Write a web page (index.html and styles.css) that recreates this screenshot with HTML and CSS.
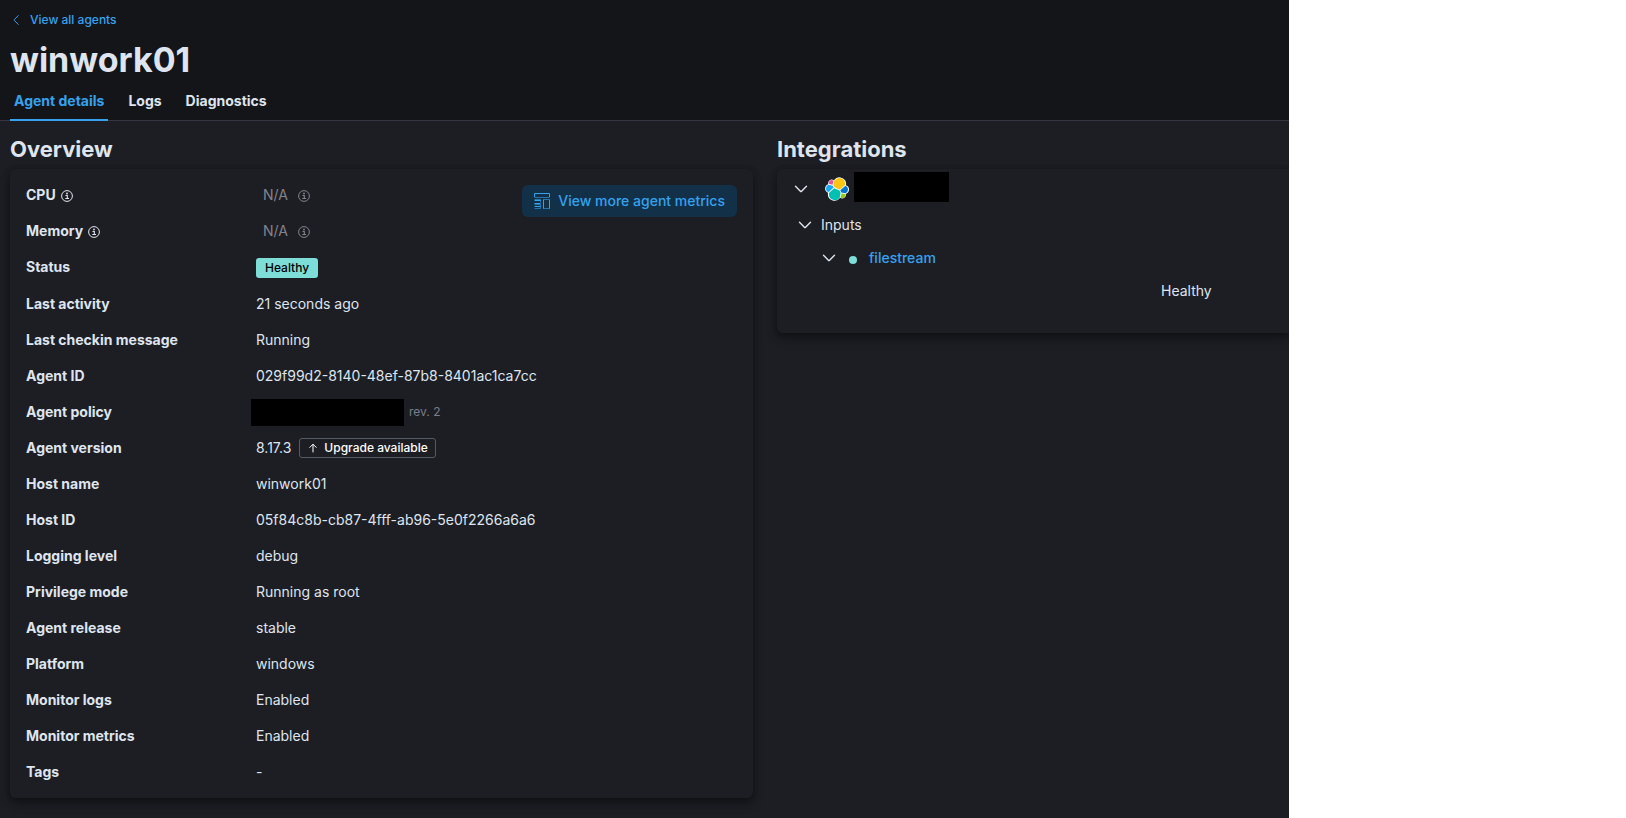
FILE: index.html
```html
<!DOCTYPE html>
<html lang="en">
<head>
    <meta charset="UTF-8">
    <meta name="viewport" content="width=device-width, initial-scale=1.0">
    <title>winwork01 - Agents</title>
    <link rel="stylesheet" href="styles.css">
</head>
<body>
    <!-- shared icons -->
    <svg class="sprite" aria-hidden="true">
        <symbol id="info" viewBox="0 0 12 12">
            <circle cx="6" cy="6" r="5.4" fill="none" stroke="currentColor" stroke-width="1"/>
            <path d="M4.5 5.500h1.800v3M4.300 8.500h3.700" fill="none" stroke="currentColor" stroke-width="1.1"/>
            <circle cx="6" cy="3.500" r="0.9" fill="currentColor"/>
        </symbol>
        <symbol id="arrowDown" viewBox="0 0 16 16">
            <path d="M2.5 5.3L7.4 10.2a.8.8 0 0 0 1.2 0L13.5 5.3" fill="none" stroke="currentColor" stroke-width="1.4" stroke-linecap="round"/>
        </symbol>
    </svg>

    <div class="app">
        <header class="header">
            <a class="backLink" href="#">
                <svg class="backIcon" viewBox="0 0 12 12"><path d="M8.200 1.600L4.300 5.600a.6.6 0 0 0 0 .8L8.200 10.400" fill="none" stroke="currentColor" stroke-linecap="round"/></svg>
                View all agents
            </a>
            <h1>winwork01</h1>
            <nav class="tabs">
                <a class="tab active" href="#">Agent details</a>
                <a class="tab" href="#">Logs</a>
                <a class="tab" href="#">Diagnostics</a>
            </nav>
        </header>

        <main class="content">
            <section>
                <h2>Overview</h2>
                <div class="panel overview">
                    <dl class="details">
                        <div class="row">
                            <dt>CPU <svg class="infoIcon"><use href="#info"/></svg></dt>
                            <dd class="notAvailable">N/A <svg class="infoIcon"><use href="#info"/></svg></dd>
                        </div>
                        <div class="row">
                            <dt>Memory <svg class="infoIcon"><use href="#info"/></svg></dt>
                            <dd class="notAvailable">N/A <svg class="infoIcon"><use href="#info"/></svg></dd>
                        </div>
                        <div class="row status">
                            <dt>Status</dt>
                            <dd><span class="badge healthy">Healthy</span></dd>
                        </div>
                        <div class="row">
                            <dt>Last activity</dt>
                            <dd>21 seconds ago</dd>
                        </div>
                        <div class="row">
                            <dt>Last checkin message</dt>
                            <dd>Running</dd>
                        </div>
                        <div class="row">
                            <dt>Agent ID</dt>
                            <dd>029f99d2-8140-48ef-87b8-8401ac1ca7cc</dd>
                        </div>
                        <div class="row">
                            <dt>Agent policy</dt>
                            <dd class="policy"><span class="hiddenPolicy"></span><span class="revision">rev. 2</span></dd>
                        </div>
                        <div class="row">
                            <dt>Agent version</dt>
                            <dd>
                                8.17.3
                                <span class="badge upgrade">
                                    <svg class="upIcon" viewBox="0 0 12 12"><path d="M6 10V2.500M2.800 5.400L6 2.200l3.200 3.200" fill="none" stroke="currentColor" stroke-linecap="round" stroke-linejoin="round"/></svg>
                                    Upgrade available
                                </span>
                            </dd>
                        </div>
                        <div class="row">
                            <dt>Host name</dt>
                            <dd>winwork01</dd>
                        </div>
                        <div class="row">
                            <dt>Host ID</dt>
                            <dd>05f84c8b-cb87-4fff-ab96-5e0f2266a6a6</dd>
                        </div>
                        <div class="row">
                            <dt>Logging level</dt>
                            <dd>debug</dd>
                        </div>
                        <div class="row">
                            <dt>Privilege mode</dt>
                            <dd>Running as root</dd>
                        </div>
                        <div class="row">
                            <dt>Agent release</dt>
                            <dd>stable</dd>
                        </div>
                        <div class="row">
                            <dt>Platform</dt>
                            <dd>windows</dd>
                        </div>
                        <div class="row">
                            <dt>Monitor logs</dt>
                            <dd>Enabled</dd>
                        </div>
                        <div class="row">
                            <dt>Monitor metrics</dt>
                            <dd>Enabled</dd>
                        </div>
                        <div class="row">
                            <dt>Tags</dt>
                            <dd>-</dd>
                        </div>
                    </dl>
                    <button class="metricsButton" type="button">
                        <svg class="dashboardIcon" viewBox="0 0 16 16" fill="none" stroke="currentColor">
                            <path d="M.5 4V.5h15V4"/>
                            <path d="M.5 4.500h15" opacity="0.6"/>
                            <path d="M.5 7.500h6M.5 10.500h6M.5 13.500h6M9.500 7v8.500M15.500 7v8.500"/>
                            <path d="M.5 6.500h6v3M.5 11.500h6v2M.5 15.500h6v-2M9 6.500h7M9 15.500h7" opacity="0.6"/>
                        </svg>
                        View more agent metrics
                    </button>
                </div>
            </section>

            <section>
                <h2>Integrations</h2>
                <div class="panel integrations">
                    <div class="package">
                        <button class="toggle" type="button" aria-label="Toggle integration"><svg><use href="#arrowDown"/></svg></button>
                        <svg class="elasticLogo" viewBox="0 0 32 32">
                            <path fill="#fff" d="M32 16.8a6 6 0 0 0-4-5.7A9 9 0 0 0 11.900 4.200 4.800 4.800 0 0 0 4.500 9.500 6.100 6.100 0 0 0 4 21 9 9 0 0 0 20.200 27.800 4.800 4.800 0 0 0 27.600 22.500 6 6 0 0 0 32 16.800"/>
                            <path fill="#fec514" d="M12.600 13.800l7 3.200 7.100-6.200a8 8 0 0 0 .1-1.500 7.900 7.900 0 0 0-14.400-4.500l-1.200 6.100z"/>
                            <path fill="#00bfb3" d="M5.300 21.200a8 8 0 0 0-.1 1.500 7.900 7.900 0 0 0 14.500 4.500l1.100-6.100-1.500-3-7.100-3.200z"/>
                            <path fill="#f04e98" d="M5.300 9.100l4.800 1.200 1.100-5.500a3.800 3.800 0 0 0-5.900 4.300"/>
                            <path fill="#1ba9f5" d="M4.900 10.300a5.300 5.300 0 0 0-.2 10l6.800-6.200-1.300-2.600z"/>
                            <path fill="#93c90e" d="M20.900 27.200a3.800 3.800 0 0 0 5.900-4.300l-4.800-1.200z"/>
                            <path fill="#07c" d="M21.800 20.500l5.300 1.200a5.300 5.300 0 0 0 .2-10l-7 6.100z"/>
                        </svg>
                        <span class="hiddenName"></span>
                    </div>
                    <div class="inputs">
                        <button class="toggle" type="button" aria-label="Toggle inputs"><svg><use href="#arrowDown"/></svg></button>
                        Inputs
                    </div>
                    <div class="stream">
                        <button class="toggle" type="button" aria-label="Toggle filestream"><svg><use href="#arrowDown"/></svg></button>
                        <span class="dot"></span>
                        <a href="#">filestream</a>
                    </div>
                    <div class="streamStatus">Healthy</div>
                </div>
            </section>
        </main>
    </div>
</body>
</html>
```

FILE: styles.css
```css
* {
    box-sizing: border-box;
}

body {
    margin: 0;
    background-color: #fff;
    color: #dfe5ef;
    font-family: Inter, "Liberation Sans", sans-serif;
    font-size: 14px;
    line-height: 20px;
}

a {
    color: #36a2ef;
    text-decoration: none;
}

button {
    border: 0;
    padding: 0;
    background: none;
    color: inherit;
    font: inherit;
    cursor: pointer;
}

h1,
h2,
dl,
dd {
    margin: 0;
}

svg {
    flex: none;
}

.sprite {
    display: none;
}

/* the app leaves a blank strip on the right side */
.app {
    min-height: 100vh;
    margin-right: 337px;
    overflow: hidden;
    background-color: #1d1e24;
}

/* page header */
.header {
    padding: 10px 10px 0;
    border-bottom: 1px solid #343741;
    background-color: #141519;
}

.backLink {
    display: flex;
    align-items: center;
    gap: 8px;
    font-size: 12px;
    font-weight: 500;
}

.backIcon {
    width: 12px;
    height: 12px;
}

h1 {
    margin-top: 10px;
    font-size: 34px;
    font-weight: 700;
    line-height: 40px;
}

.tabs {
    display: flex;
    gap: 16px;
    margin-bottom: -1px;
}

.tab {
    padding: 11px 4px 8px;
    border-bottom: 2px solid transparent;
    color: #dfe5ef;
    font-weight: 700;
}

.tab.active {
    border-bottom-color: #36a2ef;
    color: #36a2ef;
}

/* two columns, the right one runs to the edge of the app */
.content {
    display: grid;
    grid-template-columns: 743fr 512fr;
    gap: 24px;
    align-items: start;
    padding: 12px 0 20px 10px;
}

h2 {
    margin-bottom: 4px;
    font-size: 22px;
    font-weight: 700;
    line-height: 32px;
}

.panel {
    border-radius: 6px;
    background-color: #1d1e24;
    box-shadow: 0 1px 5px rgba(0, 0, 0, 0.2), 0 4px 8px rgba(0, 0, 0, 0.2), 0 6px 12px rgba(0, 0, 0, 0.2);
}

/* overview */
.overview {
    display: flex;
    align-items: flex-start;
    padding: 16px;
}

.details {
    display: flex;
    flex: 1;
    flex-direction: column;
    gap: 16px;
    min-width: 0;
}

.row {
    display: grid;
    grid-template-columns: 230px 1fr;
    grid-template-rows: 100%;
    align-items: center;
    height: 20px;
}

.row.status {
    height: 21px;
    align-items: start;
}

.row.status dd {
    align-self: end;
}

dt,
dd {
    display: flex;
    align-items: center;
    white-space: nowrap;
}

dt {
    gap: 5px;
    font-weight: 700;
}

dd {
    gap: 8px;
}

.infoIcon {
    width: 12px;
    height: 12px;
    margin-top: 2px;
}

.notAvailable {
    gap: 10px;
    padding-left: 7px;
    color: #81848d;
}

.badge {
    display: flex;
    align-items: center;
    height: 20px;
    border-radius: 3px;
    font-size: 12px;
    font-weight: 500;
}

.healthy {
    padding: 0 9px;
    background-color: #7dded8;
    color: #000;
}

.upgrade {
    gap: 5px;
    padding: 0 7px;
    border: 1px solid #535966;
    color: #fff;
}

.upIcon {
    width: 12px;
    height: 12px;
}

.policy {
    gap: 5px;
}

.hiddenPolicy {
    width: 153px;
    height: 27px;
    margin-left: -5px;
    background-color: #000;
}

.revision {
    color: #7a7e88;
    font-size: 12px;
}

.metricsButton {
    display: flex;
    flex: none;
    align-items: center;
    gap: 8px;
    height: 32px;
    padding: 0 12px;
    border-radius: 6px;
    background-color: #123148;
    color: #36a2ef;
    font-weight: 500;
}

.dashboardIcon {
    width: 16px;
    height: 16px;
}

/* integrations */
.integrations {
    padding: 3px 0 32px;
    border-radius: 6px 0 0 6px;
}

.package,
.inputs,
.stream {
    display: flex;
    align-items: center;
}

.package {
    height: 34px;
    padding-left: 16px;
}

.inputs {
    gap: 8px;
    margin-top: 9px;
    padding-left: 20px;
}

.stream {
    gap: 12px;
    margin-top: 13px;
    padding-left: 44px;
    font-weight: 500;
}

.streamStatus {
    margin-top: 13px;
    padding-left: 75%;
}

.toggle,
.toggle svg {
    display: block;
    width: 16px;
    height: 16px;
}

.elasticLogo {
    width: 24px;
    height: 24px;
    margin: 0 5px 0 16px;
}

.hiddenName {
    align-self: flex-start;
    width: 95px;
    height: 30px;
    background-color: #000;
}

.dot {
    width: 8px;
    height: 8px;
    margin-top: 3px;
    border-radius: 50%;
    background-color: #7dded8;
}
```
